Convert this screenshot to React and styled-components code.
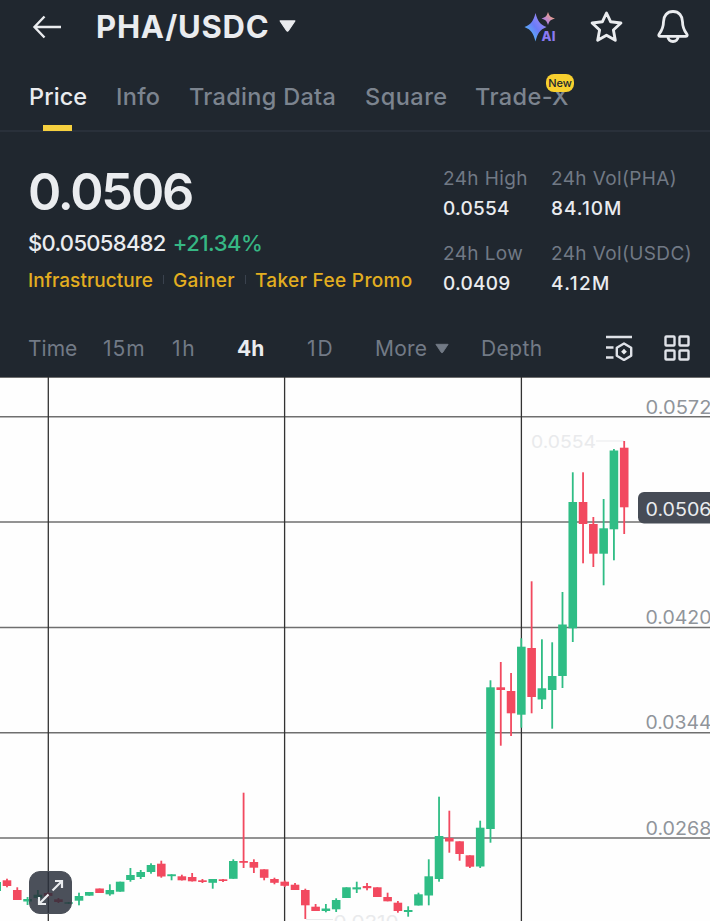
import React from 'react';
import styled, { createGlobalStyle } from 'styled-components';

const GlobalStyle = createGlobalStyle`
  * {
    box-sizing: border-box;
  }
  body {
    margin: 0;
    background: #20272f;
    font-family: Inter, 'Liberation Sans', sans-serif;
    overflow: hidden;
  }
  svg {
    display: block;
  }
`;

const Page = styled.div`
  width: 710px;
  height: 921px;
  display: flex;
  flex-direction: column;
  overflow: hidden;
  color: #eaecef;
  white-space: nowrap;
`;

const TopBar = styled.header`
  height: 60px;
  padding: 0 20px 6px 32px;
  display: flex;
  align-items: center;
`;

const Pair = styled.h1`
  width: 183px;
  margin: 0 0 0 34px;
  font-size: 31px;
  line-height: 36px;
  font-weight: 650;
  letter-spacing: 0.8px;
`;

const TopIcons = styled.div`
  margin-left: auto;
  display: flex;
  align-items: center;
  gap: 32px;
`;

const Tabs = styled.nav`
  height: 72px;
  padding-left: 29px;
  display: grid;
  grid-template-columns: 87px 73px 176px 110px auto;
  border-bottom: 2px solid #29303a;
`;

const Tab = styled.div`
  position: relative;
  justify-self: start;
  padding-top: 22px;
  font-size: 23.5px;
  line-height: 30px;
  font-weight: 500;
  letter-spacing: ${p => p.$spacing || 0}px;
  color: ${p => (p.$active ? '#eaecef' : '#7c848f')};
  &::after {
    content: '';
    display: ${p => (p.$active ? 'block' : 'none')};
    position: absolute;
    left: 14px;
    bottom: -1px;
    width: 29px;
    height: 6px;
    background: #f6d03f;
  }
`;

const NewBadge = styled.span`
  position: absolute;
  top: 14px;
  left: 71px;
  width: 28px;
  height: 18px;
  border-radius: 8px;
  background: #f8d02f;
  color: #202630;
  font-size: 11px;
  line-height: 19px;
  font-weight: 500;
  letter-spacing: 0;
  text-align: center;
`;

const Summary = styled.section`
  height: 186px;
  padding: 31px 0 0 28px;
  display: grid;
  grid-template-columns: 415px auto;
`;

const LastPrice = styled.div`
  height: 60px;
  font-size: 50.5px;
  line-height: 58px;
  font-weight: 620;
  letter-spacing: -2.2px;
`;

const PriceLine = styled.div`
  margin-top: 5px;
  display: flex;
  gap: 7px;
  font-size: 22px;
  line-height: 30px;
  font-weight: 500;
  letter-spacing: -0.68px;
  span {
    color: #36b784;
    letter-spacing: -0.45px;
  }
`;

const Tags = styled.div`
  margin-top: 10px;
  display: flex;
  align-items: center;
  color: #e3ae20;
  font-size: 19px;
  line-height: 26px;
  font-weight: 500;
`;

const Tag = styled.span`
  letter-spacing: ${p => p.$spacing}px;
  & + & {
    margin-left: 10px;
    padding-left: 10px;
    background: linear-gradient(#3a424e, #3a424e) left 7px / 1px 9px no-repeat;
  }
`;

const Stats = styled.dl`
  margin: 0;
  padding-top: 3px;
  display: grid;
  grid-template-columns: 108px auto;
  grid-auto-rows: 75px;
`;

const Stat = styled.div`
  dt {
    color: #717985;
    font-size: 19px;
    line-height: 26px;
    letter-spacing: 0.38px;
  }
  dd {
    margin: 4px 0 0;
    font-size: 19px;
    line-height: 26px;
    font-weight: 450;
    letter-spacing: ${p => p.$spacing || 0.25}px;
  }
`;

const Intervals = styled.nav`
  height: 59px;
  padding: 1px 19px 0 28px;
  display: grid;
  grid-template-columns: 75px 69px 65px 70px 68px 106px 124px 59px auto;
  align-items: center;
`;

const Interval = styled.div`
  padding-top: 1px;
  display: flex;
  align-items: center;
  gap: 8px;
  font-size: 21px;
  line-height: 30px;
  font-weight: ${p => (p.$active ? 700 : 400)};
  color: ${p => (p.$active ? '#eaecef' : '#727a86')};
  letter-spacing: ${p => p.$spacing || 0}px;
`;

const ChartArea = styled.main`
  position: relative;
  height: 544px;
  background: #fefefe;
`;

const ExpandButton = styled.button`
  position: absolute;
  left: 29px;
  top: 494px;
  width: 43px;
  height: 43px;
  padding: 0;
  display: grid;
  place-items: center;
  border: 1px solid #4b5059;
  border-radius: 11px;
  background: rgba(41, 47, 58, 0.84);
`;

const BackIcon = () => (
  <svg width="30" height="24" viewBox="0 0 30 24" fill="none" stroke="#eaecef" strokeWidth="2.4">
    <path d="M12.500 1.500L2.500 12l10 10.500M2.500 12H29" />
  </svg>
);

const Caret = ({ w, h, color }) => (
  <svg width={w} height={h} viewBox="0 0 16 11">
    <path d="M1 .7h14L8.800 10q-.8 1-1.600 0z" fill={color} stroke={color} strokeLinejoin="round" />
  </svg>
);

const PairCaret = styled.span`
  padding-bottom: 2px;
`;

const AiIcon = () => (
  <svg width="34" height="32" viewBox="0 0 34 32">
    <defs>
      <linearGradient id="spark" x1="0" y1="1" x2="1" y2="0">
        <stop offset="0.2" stopColor="#55b4f5" />
        <stop offset="0.5" stopColor="#6a7cf8" />
        <stop offset="0.9" stopColor="#a98cf0" />
      </linearGradient>
      <linearGradient id="sparkSmall" x1="0" y1="1" x2="1" y2="0">
        <stop offset="0.2" stopColor="#a77cf0" />
        <stop offset="0.8" stopColor="#f0a27e" />
      </linearGradient>
    </defs>
    <path d="M11.500 2C13.800 10.500 15.500 13 22.500 16C15.500 19 13.800 22 11.500 30.500C9.200 22 7.500 19 .5 16C7.500 13 9.200 10.500 11.500 2z" fill="url(#spark)" />
    <path d="M24 1C25.500 5.300 26.500 6.300 31 7.500C26.500 8.700 25.500 9.700 24 14C22.500 9.700 21.500 8.700 17.500 7.500C21.500 6.300 22.500 5.300 24 1z" fill="url(#sparkSmall)" />
    <text x="17.500" y="30.300" fontSize="13" fontWeight="800" fill="#8a79f2" textLength="14">AI</text>
  </svg>
);

const StarIcon = () => (
  <svg width="34" height="34" viewBox="0 0 34 34" fill="none" stroke="#eaecef" strokeWidth="2.900" strokeLinejoin="round">
    <path d="M16.500 3l4.200 8.800 10.200 1.200-7.500 7 1.900 10.200L16.500 25.200l-8.800 5 1.900-10.200-7.500-7 10.200-1.200z" />
  </svg>
);

const BellIcon = () => (
  <svg width="34" height="36" viewBox="0 0 34 36" fill="none" stroke="#eaecef" strokeWidth="2.800" strokeLinejoin="round">
    <path d="M17 2.500c-6 0-9.500 4.500-9.500 10.200 0 5.500-1 7.800-4.300 12.300-.8 1.200-.5 2.400.8 2.400h26c1.300 0 1.600-1.200.8-2.400-3.300-4.500-4.300-6.800-4.300-12.300C26.500 7 23 2.500 17 2.500zM11.700 27.500c.6 3.400 2.800 5 5.300 5s4.700-1.600 5.300-5" />
  </svg>
);

const IndicatorIcon = () => (
  <svg width="28" height="26" viewBox="0 0 28 26" fill="none" stroke="#dfe2e8" strokeWidth="2.400">
    <path d="M1 2h26M1 12.500h7.500M1 22.500h7.500" />
    <path d="M19 8.500l7.200 4.200v8L19 25l-7.200-4.300v-8z" strokeLinejoin="round" />
    <path d="M19 13.800l2.900 2.900-2.900 2.900-2.900-2.900z" fill="#eaecef" stroke="none" />
  </svg>
);

const GridIcon = () => (
  <svg width="26" height="26" viewBox="0 0 26 26" fill="none" stroke="#dfe2e8" strokeWidth="2.400">
    <rect x="1.500" y="1.500" width="9" height="9" rx="0.8" />
    <rect x="15.500" y="1.500" width="9" height="9" rx="0.8" />
    <rect x="1.500" y="15.500" width="9" height="9" rx="0.8" />
    <rect x="15.500" y="15.500" width="9" height="9" rx="0.8" />
  </svg>
);

const ExpandIcon = () => (
  <svg width="27" height="27" viewBox="0 0 27 27" fill="none" stroke="#eaecef" strokeWidth="2.200">
    <path d="M15.500 11.500L25 2M18 2h7v7M11.500 15.500L2 25M9 25H2v-7" />
  </svg>
);

const UP = '#2fbd85';
const DOWN = '#f2495f';

// direction, high, body top, body bottom, low
const candles = [
  ['u', 882, 882, 891, 891],
  ['d', 878.7, 880.3, 886, 887.3],
  ['d', 887.3, 890, 900, 900],
  ['u', 897, 899, 901.5, 905],
  ['u', 890, 894.7, 898, 899],
  ['d', 892, 893, 896, 898],
  ['d', 898, 899.3, 902, 903],
  ['u', 902, 902.3, 903.7, 904],
  ['u', 892.7, 896, 900.7, 905.3],
  ['u', 892, 892, 895.7, 895.7],
  ['d', 888.5, 888.5, 893, 893],
  ['u', 884.3, 890, 894.3, 895.7],
  ['u', 881.7, 881.7, 891.7, 891.7],
  ['u', 868, 875, 880, 881.7],
  ['u', 870, 872, 877, 879],
  ['u', 863.3, 865, 872, 873.7],
  ['d', 860.7, 863.7, 876.5, 877.7],
  ['u', 874.3, 874.3, 876.2, 880.3],
  ['d', 874.7, 876.3, 880.3, 880.5],
  ['d', 873, 877, 881.3, 881.5],
  ['d', 879, 880.3, 882, 883],
  ['u', 879, 879, 882.8, 888.7],
  ['d', 879, 879.3, 881, 882],
  ['u', 859.3, 861, 878.8, 878.8],
  ['d', 792.7, 861, 862.8, 868],
  ['d', 859.3, 862, 867.7, 873],
  ['d', 869.3, 869.3, 877.8, 880.3],
  ['d', 877.7, 879, 882.8, 884.3],
  ['d', 880.5, 881.7, 885.8, 887],
  ['d', 883, 884.7, 890, 890],
  ['d', 888.7, 890, 905.3, 919],
  ['d', 904, 906.7, 911, 911],
  ['u', 904, 908.5, 911, 912.3],
  ['u', 898.3, 900, 909.3, 912],
  ['u', 887.3, 887.3, 898, 898],
  ['u', 881.7, 887.3, 889.4, 893],
  ['d', 883, 886, 888.2, 890.3],
  ['d', 887.3, 887.3, 897, 897],
  ['d', 892.7, 897, 901.3, 901.3],
  ['d', 901, 902.7, 911, 912.7],
  ['u', 906.3, 910, 912, 916.7],
  ['u', 892.7, 894.3, 905.5, 905.5],
  ['u', 859.3, 876.3, 895.5, 905.3],
  ['u', 796.7, 836, 879, 881.7],
  ['d', 810.7, 838, 841.5, 852.7],
  ['d', 841.3, 841.3, 854, 860.7],
  ['d', 855.3, 855.3, 866.7, 868],
  ['u', 820.7, 827.7, 866.5, 868],
  ['u', 680.3, 687.3, 829, 842.7],
  ['d', 662, 687.3, 690, 745.7],
  ['d', 673, 691, 713.3, 736],
  ['u', 638.3, 646.7, 714.7, 727.7],
  ['d', 581.3, 648, 697, 713.3],
  ['u', 639.3, 688.3, 699.5, 709],
  ['u', 642.3, 676, 690, 728.7],
  ['u', 592, 624.5, 676, 688],
  ['u', 472.3, 502, 628.3, 642],
  ['d', 472.3, 502, 524, 563.3],
  ['d', 517, 524, 553.7, 567],
  ['u', 499, 528.3, 553.7, 585.3],
  ['u', 449, 450.5, 529.3, 560.3],
  ['d', 441, 447.7, 507.3, 534],
];

const axis = [
  ['0.0572', 413.8],
  ['0.0420', 623.8],
  ['0.0344', 729.3],
  ['0.0268', 834.5],
];

const candleX = i => -3.3 + i * 10.287;

const Chart = () => (
  <svg width="710" height="544" viewBox="0 377 710 544">
    <g stroke="#6f6f6f" strokeWidth="1.600">
      {[416.7, 522, 627.5, 732.7, 838].map(y => (
        <path key={y} d={`M0 ${y}H710`} />
      ))}
      <path d="M0 377.500H710" strokeWidth="1" />
    </g>
    <g stroke="#333" strokeWidth="1.300">
      {[48.3, 284.6, 521.4].map(x => (
        <path key={x} d={`M${x} 377V921`} />
      ))}
    </g>
    <g fill="#e9eaec" fontSize="17.800">
      <text x="531" y="448.300" textLength="65" lengthAdjust="spacingAndGlyphs">0.0554</text>
      <text x="333.500" y="927.500" textLength="65" lengthAdjust="spacingAndGlyphs">0.0210</text>
      <path d="M596 441H624M306 919.500H333" stroke="#e9eaec" strokeWidth="1" />
    </g>
    {candles.map(([dir, high, top, bottom, low], i) => (
      <g key={i} fill={dir === 'u' ? UP : DOWN}>
        <rect x={candleX(i) - 0.9} y={high} width="1.800" height={low - high} />
        <rect x={candleX(i) - 4.3} y={top} width="8.600" height={bottom - top} />
      </g>
    ))}
    <g fill="#90959b" fontSize="18">
      {axis.map(([label, y]) => (
        <text key={label} x="645.500" y={y} textLength="66" lengthAdjust="spacingAndGlyphs">
          {label}
        </text>
      ))}
    </g>
    <rect x="638" y="492" width="84" height="31.500" rx="6" fill="#474c56" />
    <text x="645.500" y="515.800" fontSize="18" fill="#eaecef" textLength="66" lengthAdjust="spacingAndGlyphs">
      0.0506
    </text>
  </svg>
);

export default function App() {
  return (
    <>
      <GlobalStyle />
      <Page>
        <TopBar>
          <BackIcon />
          <Pair>PHA/USDC</Pair>
          <PairCaret>
            <Caret w={17} h={12} color="#eaecef" />
          </PairCaret>
          <TopIcons>
            <AiIcon />
            <StarIcon />
            <BellIcon />
          </TopIcons>
        </TopBar>
        <Tabs>
          <Tab $active $spacing={0.1}>Price</Tab>
          <Tab $spacing={0.3}>Info</Tab>
          <Tab $spacing={0.3}>Trading Data</Tab>
          <Tab $spacing={0.5}>Square</Tab>
          <Tab $spacing={0.4}>
            Trade-X
            <NewBadge>New</NewBadge>
          </Tab>
        </Tabs>
        <Summary>
          <div>
            <LastPrice>0.0506</LastPrice>
            <PriceLine>
              $0.05058482 <span>+21.34%</span>
            </PriceLine>
            <Tags>
              <Tag $spacing={0.05}>Infrastructure</Tag>
              <Tag $spacing={0.35}>Gainer</Tag>
              <Tag $spacing={0.35}>Taker Fee Promo</Tag>
            </Tags>
          </div>
          <Stats>
            <Stat>
              <dt>24h High</dt>
              <dd>0.0554</dd>
            </Stat>
            <Stat $spacing={1}>
              <dt>24h Vol(PHA)</dt>
              <dd>84.10M</dd>
            </Stat>
            <Stat>
              <dt>24h Low</dt>
              <dd>0.0409</dd>
            </Stat>
            <Stat $spacing={1.4}>
              <dt>24h Vol(USDC)</dt>
              <dd>4.12M</dd>
            </Stat>
          </Stats>
        </Summary>
        <Intervals>
          <Interval>Time</Interval>
          <Interval $spacing={1}>15m</Interval>
          <Interval $spacing={1.6}>1h</Interval>
          <Interval $active>4h</Interval>
          <Interval $spacing={2}>1D</Interval>
          <Interval $spacing={0.2}>
            More
            <Caret w={14} h={11} color="#727a86" />
          </Interval>
          <Interval $spacing={0.4}>Depth</Interval>
          <IndicatorIcon />
          <GridIcon />
        </Intervals>
        <ChartArea>
          <Chart />
          <ExpandButton>
            <ExpandIcon />
          </ExpandButton>
        </ChartArea>
      </Page>
    </>
  );
}
